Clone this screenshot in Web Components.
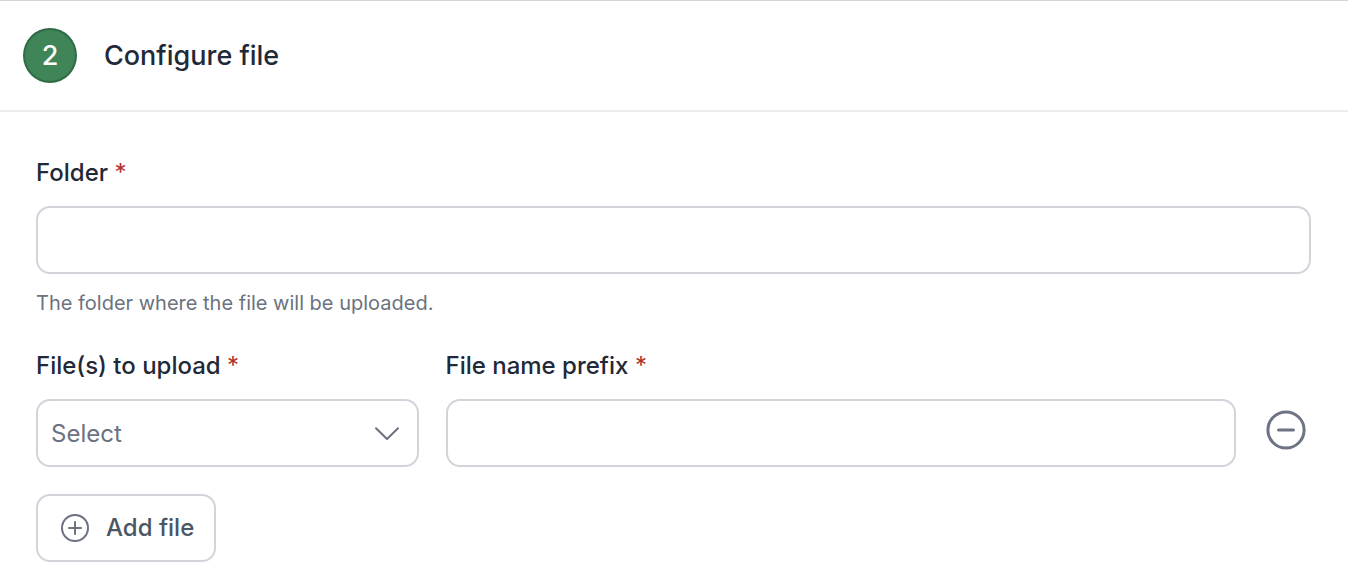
<!DOCTYPE html>
<html lang="en">
<head>
<meta charset="utf-8">
<title>Configure file</title>
<style>
  :root {
    --ink: #1f2937;
    --ink-soft: #4b5563;
    --muted: #6b7280;
    --line: #d1d5db;
    --line-soft: #ebecf0;
    --green: #3f8558;
    --green-dark: #2f6b45;
    --red: #b42f2b;
  }
  body {
    margin: 0;
    background: #fff;
    color: var(--ink);
    font-family: Inter, "Liberation Sans", sans-serif;
  }
</style>
</head>
<body>
<wizard-step number="2">
  <span slot="title">Configure file</span>
  <text-field label="Folder" name="folder">
    <span slot="hint">The folder where the file will be uploaded.</span>
  </text-field>
  <file-row></file-row>
  <add-button>Add file</add-button>
</wizard-step>

<script>
  const attach = (host, html) => {
    host.attachShadow({ mode: "open" }).innerHTML = html;
    return host.shadowRoot;
  };

  const fieldStyles = `
    :host { display: block; min-width: 0; }
    label {
      display: block;
      margin-bottom: 17px;
      font-size: 24px;
      line-height: 32px;
      font-weight: 500;
      white-space: nowrap;
    }
    .required { color: var(--red); font-weight: 400; }
    input, select {
      display: block;
      box-sizing: border-box;
      width: 100%;
      height: 68px;
      margin: 0;
      padding: 2px 14px 0 13px;
      border: 2px solid var(--line);
      border-radius: 14px;
      background: #fff;
      color: var(--muted);
      font: 400 24px/32px Inter, "Liberation Sans", sans-serif;
      outline: none;
    }
    input:focus-visible, select:focus-visible { border-color: var(--green); }
  `;

  customElements.define("wizard-step", class extends HTMLElement {
    constructor() {
      super();
      attach(this, `
        <style>
          :host { display: block; border-top: 1px solid var(--line); }
          header {
            display: flex;
            align-items: center;
            gap: 27px;
            padding: 27px 23px;
            border-bottom: 2px solid var(--line-soft);
          }
          .number {
            display: grid;
            place-items: center;
            box-sizing: border-box;
            width: 54px;
            height: 55px;
            border: 2px solid var(--green-dark);
            border-radius: 50%;
            background: var(--green);
            color: #fff;
            font-size: 27px;
            line-height: 36px;
            font-weight: 500;
          }
          h2 { margin: 0; font-size: 27px; line-height: 36px; font-weight: 500; }
          .body { padding: 45px 37px 26px 36px; }
        </style>
        <header>
          <span class="number">${this.getAttribute("number")}</span>
          <h2><slot name="title"></slot></h2>
        </header>
        <div class="body"><slot></slot></div>`);
    }
  });

  customElements.define("text-field", class extends HTMLElement {
    constructor() {
      super();
      attach(this, `
        <style>${fieldStyles}
          ::slotted([slot="hint"]) {
            display: block;
            margin-top: 16px;
            color: var(--muted);
            font-size: 20px;
            line-height: 26px;
          }
        </style>
        <label for="field">${this.getAttribute("label")} <span class="required">*</span></label>
        <input id="field" type="text" name="${this.getAttribute("name")}" required>
        <slot name="hint"></slot>`);
    }
  });

  customElements.define("select-field", class extends HTMLElement {
    constructor() {
      super();
      attach(this, `
        <style>${fieldStyles}
          .control { display: grid; align-items: center; }
          .control > * { grid-area: 1 / 1; }
          select { appearance: none; padding-right: 56px; }
          svg { justify-self: end; margin-right: 18px; pointer-events: none; }
        </style>
        <label for="field">${this.getAttribute("label")} <span class="required">*</span></label>
        <div class="control">
          <select id="field" name="${this.getAttribute("name")}" required>
            <option value="">Select</option>
          </select>
          <svg width="28" height="28" viewBox="0 0 28 28" fill="none" stroke="#6b7280" stroke-width="2" stroke-linecap="round" stroke-linejoin="round" aria-hidden="true">
            <path d="M3 9.2 14 20 25 9.2"/>
          </svg>
        </div>`);
    }
  });

  customElements.define("remove-button", class extends HTMLElement {
    constructor() {
      super();
      attach(this, `
        <style>
          :host { display: block; }
          button {
            display: grid;
            place-items: center;
            width: 48px;
            height: 48px;
            padding: 0;
            border: 0;
            border-radius: 50%;
            background: none;
            cursor: pointer;
          }
        </style>
        <button type="button" aria-label="Remove file">
          <svg width="42" height="42" viewBox="0 0 42 42" fill="none" stroke="#6e7485" stroke-width="3" stroke-linecap="round" aria-hidden="true">
            <circle cx="20" cy="21" r="18.1"/>
            <path d="M12.5 21h15"/>
          </svg>
        </button>`);
    }
  });

  customElements.define("file-row", class extends HTMLElement {
    constructor() {
      super();
      attach(this, `
        <style>
          :host {
            display: grid;
            grid-template-columns: 30% 1fr 48px;
            align-items: end;
            gap: 27px;
            margin-top: 34px;
          }
          remove-button { padding-bottom: 13px; }
        </style>
        <select-field label="File(s) to upload" name="file"></select-field>
        <text-field label="File name prefix" name="prefix"></text-field>
        <remove-button></remove-button>`);
    }
  });

  customElements.define("add-button", class extends HTMLElement {
    constructor() {
      super();
      attach(this, `
        <style>
          :host { display: block; margin-top: 27px; }
          button {
            display: flex;
            align-items: center;
            gap: 16px;
            height: 68px;
            padding: 0 20px 0 22px;
            border: 2px solid var(--line);
            border-radius: 14px;
            background: #fff;
            color: var(--ink-soft);
            font: 500 24px/32px Inter, "Liberation Sans", sans-serif;
            cursor: pointer;
          }
        </style>
        <button type="button">
          <svg width="30" height="30" viewBox="0 0 30 30" fill="none" stroke="#6b7280" stroke-width="2" stroke-linecap="round" aria-hidden="true">
            <circle cx="15" cy="15" r="13"/>
            <path d="M9 15h12M15 9v12"/>
          </svg>
          <span><slot></slot></span>
        </button>`);
    }
  });
</script>
</body>
</html>
